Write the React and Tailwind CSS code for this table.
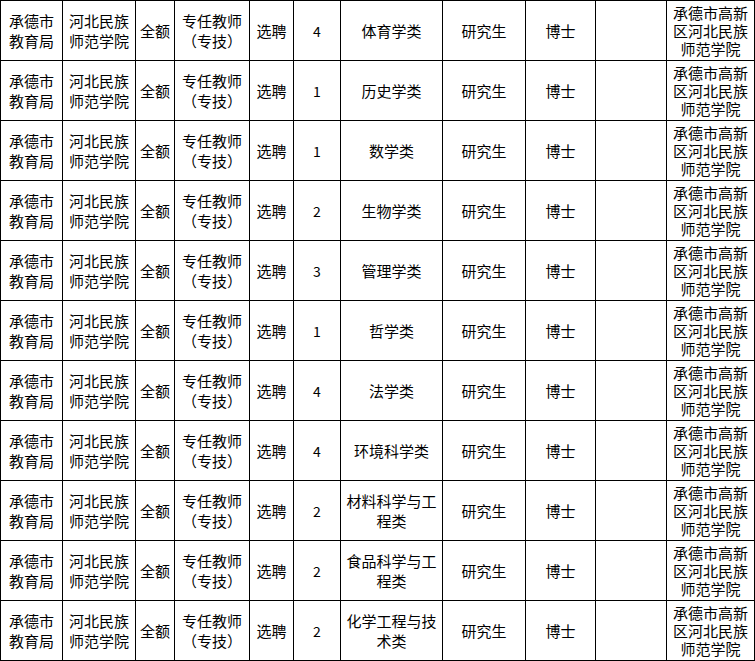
import React from "react";

const rows = [
  ["4", ["体育学类"]],
  ["1", ["历史学类"]],
  ["1", ["数学类"]],
  ["2", ["生物学类"]],
  ["3", ["管理学类"]],
  ["1", ["哲学类"]],
  ["4", ["法学类"]],
  ["4", ["环境科学类"]],
  ["2", ["材料科学与工", "程类"]],
  ["2", ["食品科学与工", "程类"]],
  ["2", ["化学工程与技", "术类"]],
];

function Cell({ lines, className = "" }) {
  return (
    <div className={"bg-white flex items-center justify-center text-center " + className}>
      <div>
        {lines.map((l, i) => (
          <div key={i}>{l}</div>
        ))}
      </div>
    </div>
  );
}

export default function App() {
  return (
    <div
      className="w-[755px] h-[661px] bg-white text-black text-[15px] leading-[20px]"
      style={{ fontFamily: '"Noto Sans CJK SC", "Noto Sans", sans-serif' }}
    >
      <div className="grid grid-cols-[61px_72px_38px_74px_43px_46px_101px_82px_69px_70px_87px] auto-rows-[59px] gap-px p-px bg-black w-[755px]">
        {rows.map(([n, major], i) => (
          <React.Fragment key={i}>
            <Cell lines={["承德市", "教育局"]} />
            <Cell lines={["河北民族", "师范学院"]} />
            <Cell lines={["全额"]} />
            <Cell lines={["专任教师", "（专技）"]} />
            <Cell lines={["选聘"]} />
            <Cell lines={[n]} className="text-[14px]" />
            <Cell lines={major} />
            <Cell lines={["研究生"]} />
            <Cell lines={["博士"]} />
            <Cell lines={[]} />
            <Cell lines={["承德市高新", "区河北民族", "师范学院"]} className="leading-[18px]" />
          </React.Fragment>
        ))}
      </div>
    </div>
  );
}
